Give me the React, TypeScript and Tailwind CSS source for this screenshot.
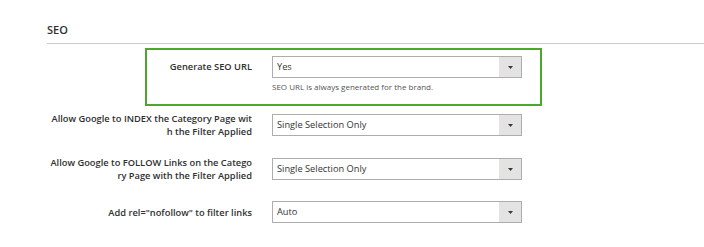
import React from 'react';

/* ── Form data ── */
interface SeoRow {
  label: string[];
  value: string;
  gap: string;
}

const rows: SeoRow[] = [
  { label: ['Allow Google to INDEX the Category Page wit', 'h the Filter Applied'], value: 'Single Selection Only', gap: 'mt-0' },
  { label: ['Allow Google to FOLLOW Links on the Catego', 'ry Page with the Filter Applied'], value: 'Single Selection Only', gap: 'mt-[22px]' },
  { label: ['Add rel="nofollow" to filter links'], value: 'Auto', gap: 'mt-[21px]' },
];

function Select({ value }: { value: string }) {
  return (
    <div className="flex h-[22px] w-[250px] shrink-0 items-stretch border border-[#adadad] bg-white">
      <div className="flex flex-1 items-center pl-[4px] text-[9.25px] text-[#333]">{value}</div>
      <div className="flex w-[22px] items-center justify-center bg-[#e3e3e3]">
        <svg width="5" height="3" viewBox="0 0 5 3">
          <path d="M0 0h5L2.5 3z" fill="#41362f" />
        </svg>
      </div>
    </div>
  );
}

export default function App() {
  return (
    <div
      className="h-[247px] w-[704px] overflow-hidden bg-white text-[#303030]"
      style={{ fontFamily: '"Open Sans", "Noto Sans", sans-serif' }}
    >
      {/* ── 标题 ── */}
      <div className="ml-[47px] mt-[22px] border-b border-[#cccccc] pb-[5px]">
        <h2 className="text-[11px] font-semibold leading-[16px] text-[#303030]">SEO</h2>
      </div>

      {/* ── 高亮行 ── */}
      <div className="ml-[145px] mt-[4px] h-[58px] w-[397px] border-2 border-[#4aa82a] pt-[6px]">
        <div className="flex items-start gap-[20px]">
          <div className="flex h-[22px] w-[105px] items-center justify-end text-[9.3px] font-semibold">Generate SEO URL</div>
          <div>
            <Select value="Yes" />
            <p className="mt-[4px] text-[8px] leading-[10px] text-[#555]">SEO URL is always generated for the brand.</p>
          </div>
        </div>
      </div>

      {/* ── 其余行 ── */}
      <div className="ml-[47px] mt-[8px] flex flex-col">
        {rows.map((row, i) => (
          <div key={i} className={`flex h-[22px] items-center gap-[20px] ${row.gap}`}>
            <div className="w-[205px] text-right text-[9.3px] font-semibold leading-[13px]">
              {row.label.map((l, j) => (
                <div key={j} className="whitespace-nowrap">{l}</div>
              ))}
            </div>
            <Select value={row.value} />
          </div>
        ))}
      </div>
    </div>
  );
}
